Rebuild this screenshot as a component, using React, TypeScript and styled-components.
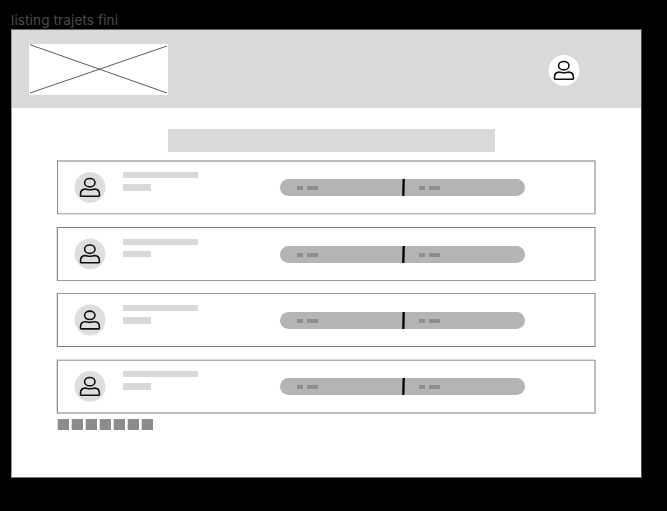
import React from "react";
import styled, { createGlobalStyle } from "styled-components";

const GlobalStyle = createGlobalStyle`
  * { box-sizing: border-box; }
  body { margin: 0; background: #000; overflow: hidden; }
`;

const Canvas = styled.div`
  width: 667px;
  height: 511px;
  padding: 10px 0 0 11px;
  background: #000;
`;

const FrameLabel = styled.div`
  height: 19px;
  font: 400 13.6px/20px Inter, sans-serif;
  letter-spacing: 0.1px;
  color: #4b4b4b;
`;

const Frame = styled.main`
  width: 631px;
  height: 449px;
  border: 1px solid;
  border-color: #666 #4c4c4c #777 #999;
  background: #fff;
`;

const Header = styled.header`
  display: flex;
  align-items: flex-start;
  justify-content: space-between;
  height: 78px;
  padding: 14px 61px 0 17px;
  background: #d9d9d9;
`;

const Logo = styled.svg`
  display: block;
  width: 139px;
  height: 51px;
  background: #fff;
`;

const AvatarIcon = styled.svg`
  flex: none;
  display: block;
  width: 32px;
  height: 32px;
`;

const HeaderActions = styled.div`
  padding-top: 10px;
`;

const Content = styled.div`
  padding: 21px 45px 0;
`;

const TitleBar = styled.div`
  width: 327px;
  height: 23px;
  margin-left: 111px;
  background: #d9d9d9;
`;

const List = styled.div`
  display: flex;
  flex-direction: column;
  margin-top: 8px;
`;

interface Edges {
  gap: number;
  top: string;
  bottom: string;
  halo: string;
}

const Card = styled.article<{ $edges: Edges }>`
  display: flex;
  align-items: flex-start;
  width: 539px;
  height: 54px;
  margin-top: ${(p) => p.$edges.gap}px;
  padding-left: 16px;
  border-left: 1px solid #8c8c8c;
  border-right: 2px solid #bdbdbd;
  border-top: ${(p) => p.$edges.top};
  border-bottom: ${(p) => p.$edges.bottom};
  box-shadow: ${(p) => p.$edges.halo};
`;

const AvatarSlot = styled.div<{ $top: number }>`
  padding-top: ${(p) => p.$top}px;
`;

const Lines = styled.div<{ $top: number }>`
  display: flex;
  flex-direction: column;
  gap: 6px;
  width: 157px;
  margin-left: 17px;
  padding-top: ${(p) => p.$top}px;
`;

const Line = styled.div<{ $w: number }>`
  width: ${(p) => p.$w}px;
  height: 6.4px;
  background: #d9d9d9;
`;

const Pill = styled.div<{ $top: number }>`
  display: flex;
  width: 245px;
  height: 17px;
  margin-top: ${(p) => p.$top}px;
  border-radius: 9px;
  background: #b4b4b4;
`;

const Segment = styled.div<{ $w: number; $pad: number }>`
  display: flex;
  align-items: center;
  gap: 4px;
  width: ${(p) => p.$w}px;
  padding-left: ${(p) => p.$pad}px;
`;

const Dash = styled.span<{ $w: number }>`
  width: ${(p) => p.$w}px;
  height: 4px;
  background: #8e8e8e;
`;

const Divider = styled.svg`
  display: block;
  width: 4px;
  height: 17px;
`;

const Pagination = styled.nav`
  display: flex;
  gap: 3px;
  margin: 5px 0 0 1px;
`;

const PageButton = styled.span`
  width: 11px;
  height: 11px;
  background: #8c8c8c;
  box-shadow: -1px 0 0 #ddd;
`;

const Avatar = ({ fill, cy }: { fill: string; cy: number }) => (
  <AvatarIcon viewBox="0 0 32 32" fill="none">
    <g transform={`translate(16 ${cy})`}>
      <circle r="15.4" fill={fill} />
      <g stroke="#111" strokeWidth="1.6">
        <ellipse cx="-.2" cy="-4.7" rx="5.2" ry="4.2" />
        <path d="M-5 1.7C-2.8 1.7-2.3 2.4-.1 2.4S2.6 1.7 4.8 1.7C7.8 1.7 9.4 4.1 9.4 7.1V8Q9.4 8.9 8.5 8.9H-8.6Q-9.5 8.9-9.5 8V7.1C-9.5 4.1-8 1.7-5 1.7Z" />
      </g>
    </g>
  </AvatarIcon>
);

interface TripLayout {
  edges: Edges;
  avatarTop: number;
  avatarCy: number;
  linesTop: number;
  pillTop: number;
}

const trips: TripLayout[] = [
  {
    edges: { gap: 0, top: "2px solid #bdbdbd", bottom: "1px solid #b8b8b8", halo: "0 1px 0 #e2e2e2" },
    avatarTop: 9, avatarCy: 16.4, linesTop: 10, pillTop: 17,
  },
  {
    edges: { gap: 13, top: "1px solid #7c7c7c", bottom: "1px solid #999", halo: "-1px 0 0 #e2e2e2" },
    avatarTop: 10, avatarCy: 15.9, linesTop: 10.6, pillTop: 18,
  },
  {
    edges: { gap: 12, top: "1px solid #999", bottom: "1px solid #7c7c7c", halo: "-1px 0 0 #e2e2e2" },
    avatarTop: 10, avatarCy: 16, linesTop: 11, pillTop: 18,
  },
  {
    edges: { gap: 13, top: "1px solid #b0b0b0", bottom: "2px solid #bdbdbd", halo: "-1px -1px 0 #dedede" },
    avatarTop: 9, avatarCy: 16.4, linesTop: 10, pillTop: 17,
  },
];

const Trip = ({ layout }: { layout: TripLayout }) => (
  <Card $edges={layout.edges}>
    <AvatarSlot $top={layout.avatarTop}>
      <Avatar fill="#dedede" cy={layout.avatarCy} />
    </AvatarSlot>
    <Lines $top={layout.linesTop}>
      <Line $w={75} />
      <Line $w={28} />
    </Lines>
    <Pill $top={layout.pillTop}>
      <Segment $w={121} $pad={17}>
        <Dash $w={6} />
        <Dash $w={11} />
      </Segment>
      <Divider viewBox="0 0 4 17">
        <path d="M2.7 0L2.3 17" stroke="#000" strokeWidth="2.3" />
      </Divider>
      <Segment $w={120} $pad={14}>
        <Dash $w={6} />
        <Dash $w={11} />
      </Segment>
    </Pill>
  </Card>
);

export default function App() {
  return (
    <>
      <GlobalStyle />
      <Canvas>
        <FrameLabel>listing trajets fini</FrameLabel>
        <Frame>
          <Header>
            <Logo viewBox="0 0 139 51">
              <path d="M1 .7L138 49M1 49L138 2" stroke="#333" strokeWidth=".8" />
            </Logo>
            <HeaderActions>
              <Avatar fill="#fff" cy={16.4} />
            </HeaderActions>
          </Header>
          <Content>
            <TitleBar />
            <List>
              {trips.map((layout, i) => <Trip key={i} layout={layout} />)}
            </List>
            <Pagination>
              {[0, 1, 2, 3, 4, 5, 6].map((i) => <PageButton key={i} />)}
            </Pagination>
          </Content>
        </Frame>
      </Canvas>
    </>
  );
}
